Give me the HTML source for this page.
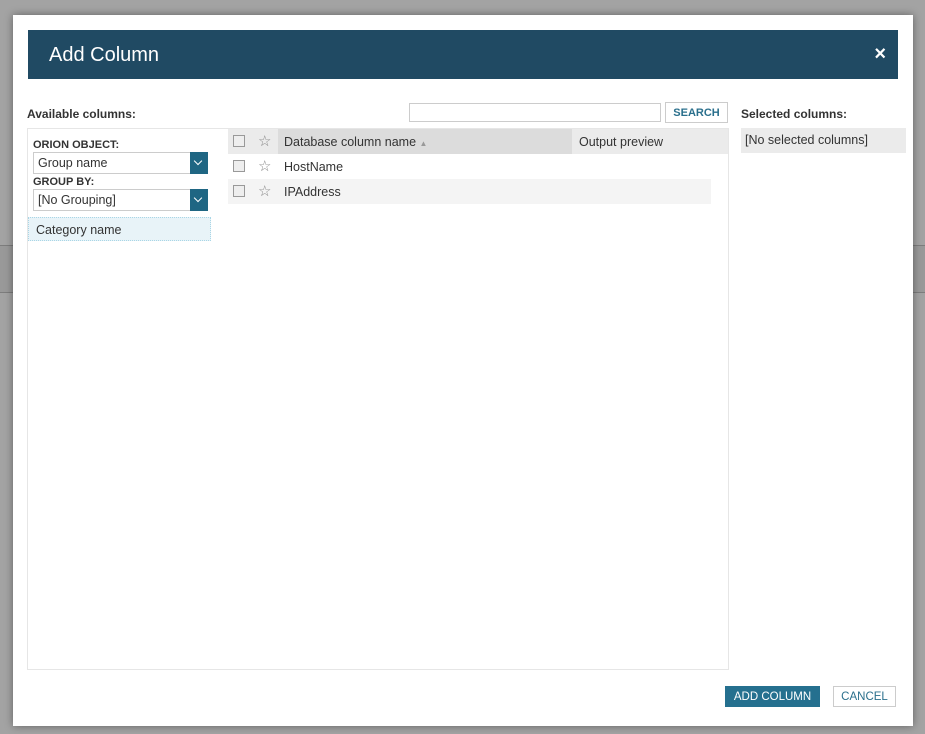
<!DOCTYPE html>
<html><head><style>
*{box-sizing:border-box;margin:0;padding:0}
body{width:925px;height:734px;background:#a3a3a3;position:relative;overflow:hidden;font-family:"Liberation Sans",sans-serif;font-size:12px;color:#333}
.band{position:absolute;left:0;width:925px;top:245px;height:48px;background:#999;border-top:1px solid #7d7d7d;border-bottom:1px solid #7d7d7d}
.modal{position:absolute;left:13px;top:15px;width:900px;height:711px;background:#fff;box-shadow:0 0 8px rgba(0,0,0,.4)}
.hdr{position:absolute;left:15px;top:15px;width:870px;height:49px;background:#204a63;color:#fff;font-size:20px;padding:14px 0 0 21px}
.x{position:absolute;right:12px;top:13px;font-size:20px;font-weight:bold}
.abs{position:absolute}
.lbl{font-weight:bold;font-size:12px;color:#333}
.sel{position:absolute;width:175px;height:22px;border:1px solid #ccc;background:#fff;font-size:12.5px;padding:3px 4px}
.sel .btn{position:absolute;right:-1px;top:-1px;width:18px;height:22px;background:#1f6683}
.sel .btn:after{content:"";position:absolute;left:5px;top:6px;width:5px;height:5px;border-right:1.5px solid #fff;border-bottom:1.5px solid #fff;transform:rotate(45deg)}
.cb{position:absolute;width:12px;height:12px;border:1px solid #999;background:#eee}
.star{position:absolute;color:#888;font-size:15px;line-height:15px}
</style></head><body>
<div class="band"></div>
<div class="modal">
<div class="hdr">Add Column<span class="x">×</span></div>
<div class="abs lbl" style="left:14px;top:92px">Available columns:</div>
<div class="abs" style="left:396px;top:88px;width:252px;height:19px;border:1px solid #ccc"></div>
<div class="abs" style="left:652px;top:87px;width:63px;height:21px;border:1px solid #ccc;color:#2a6f8c;font-weight:bold;font-size:11px;text-align:center;padding-top:4px">SEARCH</div>
<div class="abs lbl" style="left:728px;top:92px">Selected columns:</div>
<div class="abs" style="left:14px;top:113px;width:702px;height:542px;border:1px solid #e6e6e6"></div>
<div class="abs" style="left:728px;top:113px;width:165px;height:25px;background:#ebebeb;padding:5px 4px;font-size:12.5px">[No selected columns]</div>
<div class="abs lbl" style="left:20px;top:124px;font-size:11px">ORION OBJECT:</div>
<div class="sel" style="left:20px;top:137px">Group name<div class="btn"></div></div>
<div class="abs lbl" style="left:20px;top:161px;font-size:11px">GROUP BY:</div>
<div class="sel" style="left:20px;top:174px">[No Grouping]<div class="btn"></div></div>
<div class="abs" style="left:15px;top:202px;width:183px;height:24px;border:1px dotted #a9d6e6;background:#e8f3f8;padding:5px 7px;font-size:12.5px">Category name</div>
<div class="abs" style="left:215px;top:114px;width:500px;height:25px;background:#ebebeb"></div>
<div class="abs" style="left:265px;top:114px;width:294px;height:25px;background:#dcdcdc;padding:6px 6px;font-size:12.5px">Database column name <span style="font-size:8px;color:#999">▲</span></div>
<div class="abs" style="left:566px;top:120px;font-size:12.5px">Output preview</div>
<div class="abs" style="left:215px;top:164px;width:483px;height:25px;background:#f4f4f4"></div>
<div class="cb" style="left:220px;top:120px"></div><div class="star" style="left:245px;top:119px">☆</div>
<div class="cb" style="left:220px;top:145px"></div><div class="star" style="left:245px;top:144px">☆</div>
<div class="abs" style="left:271px;top:145px;font-size:12.5px">HostName</div>
<div class="cb" style="left:220px;top:170px"></div><div class="star" style="left:245px;top:169px">☆</div>
<div class="abs" style="left:271px;top:170px;font-size:12.5px">IPAddress</div>
<div class="abs" style="left:712px;top:671px;width:95px;height:21px;background:#25708f;color:#fff;font-size:11.5px;text-align:center;padding-top:5px">ADD COLUMN</div>
<div class="abs" style="left:820px;top:671px;width:63px;height:21px;border:1px solid #ccc;color:#2a6f8c;font-size:11.5px;text-align:center;padding-top:4px">CANCEL</div>
</div>
</body></html>
